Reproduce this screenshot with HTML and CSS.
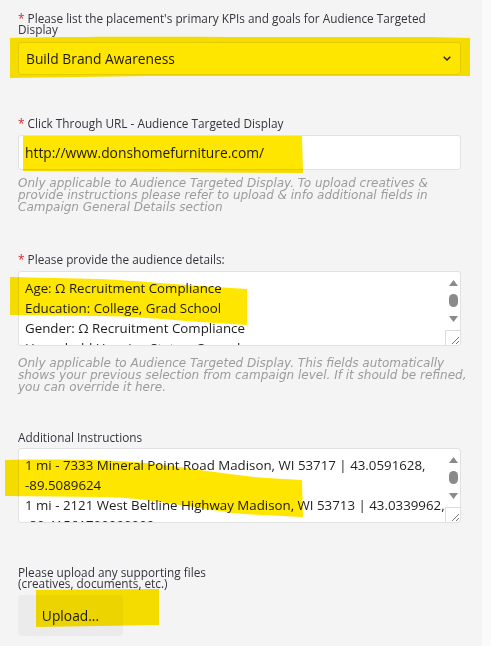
FILE: index.html
```html
<!DOCTYPE html>
<html lang="en">
<head>
<meta charset="utf-8">
<title>Audience Targeted Display</title>
<link rel="stylesheet" href="styles.css">
</head>
<body>
<main class="form">
  <div class="field f-kpi">
    <label class="label"><span class="req">*</span> Please list the placement's primary KPIs and goals for Audience Targeted Display</label>
    <div class="select">
      <span>Build Brand Awareness</span>
      <svg class="chev" width="8" height="5" viewBox="0 0 8 5"><path d="M0.7 0.7 L4 4 L7.3 0.7" fill="none" stroke="#222" stroke-width="1.4"/></svg>
    </div>
  </div>

  <div class="field f-url">
    <label class="label"><span class="req">*</span> Click Through URL - Audience Targeted Display</label>
    <div class="input">http://www.donshomefurniture.com/</div>
    <p class="help">Only applicable to Audience Targeted Display. To upload creatives &amp;<br>provide instructions please refer to upload &amp; info additional fields in<br>Campaign General Details section</p>
  </div>

  <div class="field f-aud">
    <label class="label"><span class="req">*</span> Please provide the audience details:</label>
    <div class="textarea">
      <div class="ta-text">
        <div>Age: Ω Recruitment Compliance</div>
        <div>Education: College, Grad School</div>
        <div>Gender: Ω Recruitment Compliance</div>
        <div>Household Housing Status: Owned</div>
      </div>
      <div class="sbar">
        <svg class="arrow" width="9" height="6" viewBox="0 0 9 6"><path d="M4.5 0 L9 6 L0 6 Z" fill="#8a8a8a"/></svg>
        <div class="thumb"></div>
        <svg class="arrow" width="9" height="6" viewBox="0 0 9 6"><path d="M0 0 L9 0 L4.5 6 Z" fill="#8a8a8a"/></svg>
        <div class="corner"><svg width="8" height="8" viewBox="0 0 8 8"><path d="M1 8 L8 1 M5 8 L8 5" stroke="#777" stroke-width="1"/></svg></div>
      </div>
    </div>
    <p class="help help-ta">Only applicable to Audience Targeted Display. This fields automatically<br>shows your previous selection from campaign level. If it should be refined,<br>you can override it here.</p>
  </div>

  <div class="field f-add">
    <label class="label plain">Additional Instructions</label>
    <div class="textarea">
      <div class="ta-text">
        <div>1 mi - 7333 Mineral Point Road Madison, WI 53717 | 43.0591628,</div>
        <div>-89.5089624</div>
        <div>1 mi - 2121 West Beltline Highway Madison, WI 53713 | 43.0339962,</div>
        <div>-89.41561700000000</div>
      </div>
      <div class="sbar">
        <svg class="arrow" width="9" height="6" viewBox="0 0 9 6"><path d="M4.5 0 L9 6 L0 6 Z" fill="#8a8a8a"/></svg>
        <div class="thumb"></div>
        <svg class="arrow" width="9" height="6" viewBox="0 0 9 6"><path d="M0 0 L9 0 L4.5 6 Z" fill="#8a8a8a"/></svg>
        <div class="corner"><svg width="8" height="8" viewBox="0 0 8 8"><path d="M1 8 L8 1 M5 8 L8 5" stroke="#777" stroke-width="1"/></svg></div>
      </div>
    </div>
  </div>

  <div class="field f-up">
    <label class="label plain">Please upload any supporting files<br>(creatives, documents, etc.)</label>
    <button class="upload" type="button">Upload...</button>
  </div>
</main>

<svg class="marks" width="491" height="646" viewBox="0 0 491 646">
  <path d="M10 38 C80 36 200 37 300 37 L430 37 L470 38 L470 76 C400 76 300 76 150 76 L10 78 Z"/>
  <path d="M23 136 L302 136 L303 173 L23 171 Z"/>
  <path d="M10 277 C40 278 70 278 100 279 C140 281 170 284 200 286 L247 289 L247 325 C230 324 215 323 200 322 C160 319 130 316 100 316 L10 315 Z"/>
  <path d="M5 460 C60 459 110 460 133 462 C160 464 180 467 200 470 C230 474 250 477 267 478 L302 480 L303 517 C280 516 255 515 233 513 C210 510 190 506 167 503 C140 499 120 497 100 497 L5 496 Z"/>
  <path d="M36 590 L159 589 L159 625 L36 627 Z"/>
</svg>
</body>
</html>
```

FILE: styles.css
```css
* { box-sizing: border-box; }

html { background: #fafafa; }

body {
  margin: 0;
  font-family: "Open Sans", "Liberation Sans", sans-serif;
  color: #33333d;
  position: relative;
}

.form {
  width: 482px;
  min-height: 646px;
  background: #f4f4f4;
  padding: 13px 0 0 18px;
}

.field { width: 443px; }

.f-url { margin-top: 43px; }
.f-aud { margin-top: 41px; }
.f-add { margin-top: 39px; }
.f-up  { margin-top: 44px; }

.label {
  display: block;
  font-size: 11.8px;
  line-height: 11px;
  color: #34343e;
  width: 430px;
}

.req { color: #d7262e; }

.select {
  margin-top: 7px;
  height: 33px;
  background: #fff;
  border: 1px solid #e3e3e3;
  border-radius: 3px;
  display: flex;
  align-items: center;
  justify-content: space-between;
  padding: 0 9px 0 7px;
  font-size: 13.8px;
  color: #1e1e1e;
}

.chev { display: block; }

.input {
  margin-top: 6px;
  height: 35px;
  background: #fff;
  border: 1px solid #e1e1e1;
  border-radius: 3px;
  display: flex;
  align-items: center;
  padding-left: 6px;
  font-size: 13.8px;
  color: #1e1e1e;
}

.help {
  margin: 7px 0 0;
  width: 470px;
  font-family: "DejaVu Sans", "Liberation Sans", sans-serif;
  font-size: 12px;
  line-height: 12px;
  font-style: italic;
  color: #9c9c9c;
}

.help-ta { margin-top: 11px; }

.textarea {
  margin-top: 6px;
  height: 75px;
  background: #fff;
  border: 1px solid #e1e1e1;
  border-radius: 3px;
  display: flex;
  overflow: hidden;
}

.f-add .textarea { margin-top: 5px; }

.ta-text {
  flex: 1;
  padding: 6px 0 0 6px;
  font-size: 13.3px;
  line-height: 20px;
  color: #1e1e1e;
  white-space: nowrap;
  overflow: hidden;
}

.sbar {
  width: 14px;
  display: flex;
  flex-direction: column;
  align-items: center;
  padding-top: 8px;
}

.arrow { display: block; }

.thumb {
  width: 9px;
  height: 13px;
  border-radius: 4.5px;
  background: #8a8a8a;
  margin: 8px 0 9px;
}

.corner {
  margin-top: auto;
  width: 15px;
  height: 15px;
  border-top: 1px solid #dcdcdc;
  border-left: 1px solid #dcdcdc;
  display: flex;
  align-items: flex-end;
  justify-content: flex-end;
  padding: 0 1px 1px 0;
  align-self: flex-end;
}

.corner svg { display: block; }

.upload {
  margin-top: 6px;
  width: 105px;
  height: 41px;
  background: #ebebeb;
  border: none;
  border-radius: 4px;
  font-family: inherit;
  font-size: 13.8px;
  color: #1e1e1e;
  padding: 0;
}

.marks {
  position: absolute;
  top: 0;
  left: 0;
  pointer-events: none;
  mix-blend-mode: multiply;
  fill: #ffe600;
}
```
